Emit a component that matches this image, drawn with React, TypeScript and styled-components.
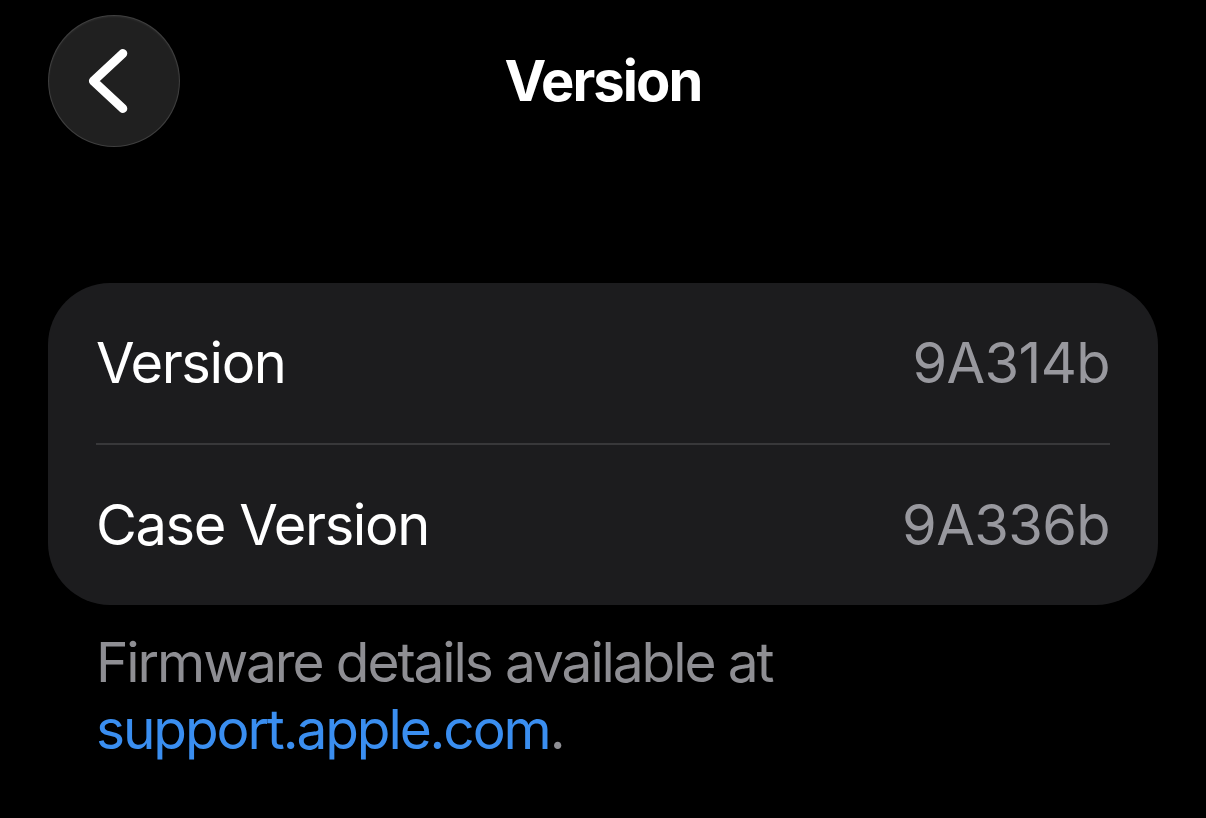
import React from "react";
import styled, { createGlobalStyle } from "styled-components";

const Global = createGlobalStyle`
  html, body { margin: 0; padding: 0; background: #000; }
  body { font-family: Inter, "Noto Sans", "Liberation Sans", sans-serif; -webkit-font-smoothing: antialiased; }
  * { box-sizing: border-box; }
`;

const Page = styled.div`
  width: 1206px;
  height: 818px;
  background: #000;
  color: #fff;
  padding: 15px 48px 0 48px;
  overflow: hidden;
`;

const Header = styled.header`
  display: grid;
  grid-template-columns: 1fr auto 1fr;
  align-items: center;
  height: 132px;
`;

const BackButton = styled.button`
  width: 132px;
  height: 132px;
  border-radius: 50%;
  background: #202020;
  border: 1.5px solid rgba(255, 255, 255, 0.14);
  box-shadow: inset 0 1px 2px rgba(255, 255, 255, 0.06);
  padding: 0;
  display: flex;
  align-items: center;
  justify-content: center;
  justify-self: start;
  cursor: pointer;
`;

const Title = styled.h1`
  margin: 0;
  font-size: 56px;
  font-weight: 700;
  letter-spacing: -1.9px;
  color: #fff;
  line-height: 1;
`;

const Card = styled.section`
  margin-top: 136px;
  background: #1c1c1e;
  border-radius: 62px;
  padding: 0 48px;
`;

const Row = styled.div`
  height: 160px;
  display: flex;
  align-items: center;
  justify-content: space-between;
  font-size: 56px;
  letter-spacing: -1.4px;
`;

const Label = styled.span`
  color: #fff;
`;

const Value = styled.span`
  color: #98989e;
  letter-spacing: -0.6px;
`;

const Divider = styled.div`
  height: 2px;
  background: #38383a;
`;

const Footer = styled.p`
  margin: 24px 0 0 0;
  padding-left: 48px;
  font-size: 55px;
  line-height: 67px;
  letter-spacing: -2.1px;
  color: #8e8e93;
  width: 900px;
`;

const Link = styled.a`
  color: #3a8ef0;
  text-decoration: none;
`;

export default function App() {
  return (
    <Page>
      <Global />
      <Header>
        <BackButton aria-label="Back">
          <svg width="132" height="132" viewBox="0 0 132 132">
            <path
              d="M75 38 L45 66 L75 94"
              fill="none"
              stroke="#fff"
              strokeWidth="9"
              strokeLinecap="round"
              strokeLinejoin="round"
            />
          </svg>
        </BackButton>
        <Title>Version</Title>
        <div />
      </Header>
      <Card>
        <Row>
          <Label>Version</Label>
          <Value>9A314b</Value>
        </Row>
        <Divider />
        <Row>
          <Label>Case Version</Label>
          <Value>9A336b</Value>
        </Row>
      </Card>
      <Footer>
        Firmware details available at <Link href="#">support.apple.com</Link>.
      </Footer>
    </Page>
  );
}
